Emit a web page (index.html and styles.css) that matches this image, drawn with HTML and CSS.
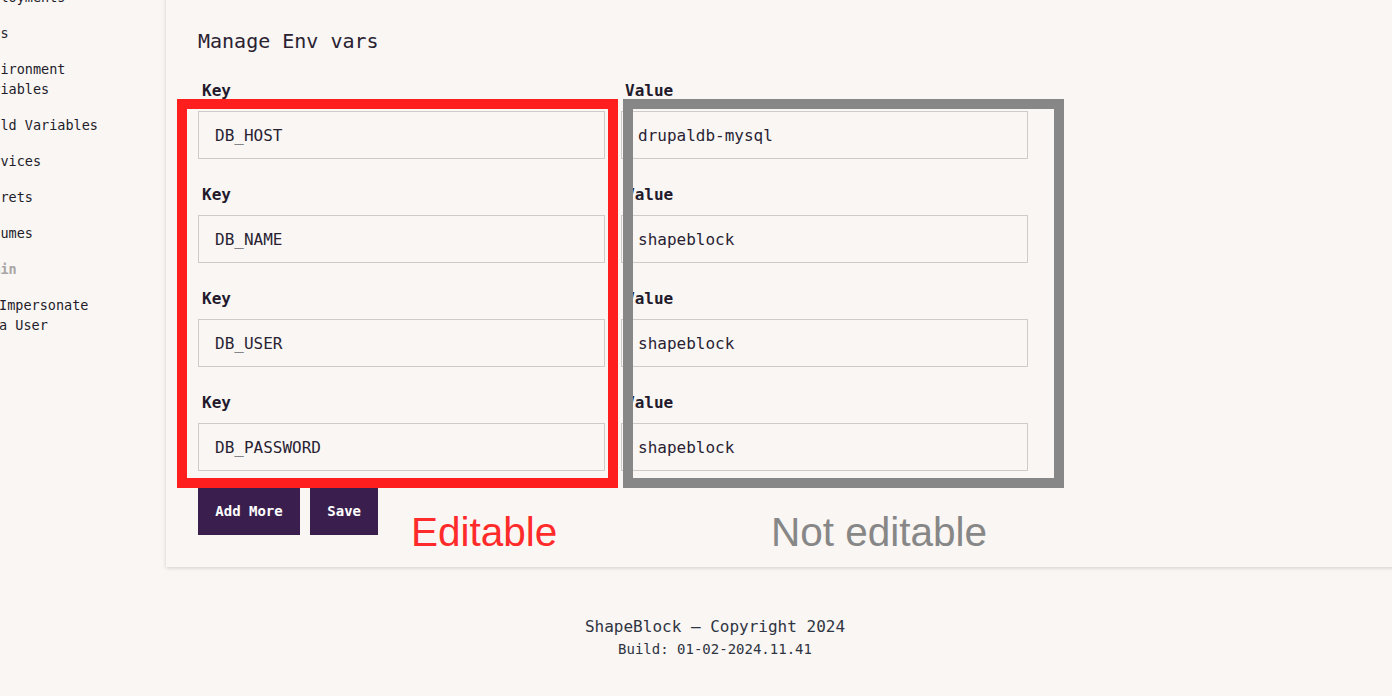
FILE: index.html
```html
<!DOCTYPE html>
<html lang="en">
<head>
<meta charset="utf-8">
<title>Manage Env vars</title>
<link rel="stylesheet" href="styles.css">
</head>
<body>
<div class="page">
  <aside class="sidebar">
    <ul class="nav">
      <li class="nav-item">Deployments</li>
      <li class="nav-item">Apps</li>
      <li class="nav-item">Environment Variables</li>
      <li class="nav-item">Build Variables</li>
      <li class="nav-item">Services</li>
      <li class="nav-item">Secrets</li>
      <li class="nav-item">Volumes</li>
      <li class="nav-item nav-heading">Admin</li>
      <li class="nav-item nav-sub">Impersonate a User</li>
    </ul>
  </aside>
  <main class="main">
    <section class="card">
      <h1 class="title">Manage Env vars</h1>
      <div class="form">
        <div class="rows">
          <div class="row">
            <div class="cell"><label class="label">Key</label><input class="field" type="text" value="DB_HOST"></div>
            <div class="cell"><label class="label">Value</label><input class="field" type="text" value="drupaldb-mysql" readonly></div>
          </div>
          <div class="row">
            <div class="cell"><label class="label">Key</label><input class="field" type="text" value="DB_NAME"></div>
            <div class="cell"><label class="label">Value</label><input class="field" type="text" value="shapeblock" readonly></div>
          </div>
          <div class="row">
            <div class="cell"><label class="label">Key</label><input class="field" type="text" value="DB_USER"></div>
            <div class="cell"><label class="label">Value</label><input class="field" type="text" value="shapeblock" readonly></div>
          </div>
          <div class="row">
            <div class="cell"><label class="label">Key</label><input class="field" type="text" value="DB_PASSWORD"></div>
            <div class="cell"><label class="label">Value</label><input class="field" type="text" value="shapeblock" readonly></div>
          </div>
        </div>
        <div class="actions">
          <button class="btn" type="button">Add More</button>
          <button class="btn" type="button">Save</button>
        </div>
        <div class="mark mark-red"></div>
        <div class="mark mark-gray"></div>
        <div class="note note-red">Editable</div>
        <div class="note note-gray">Not editable</div>
      </div>
    </section>
    <footer class="footer">
      <div class="copy">ShapeBlock — Copyright 2024</div>
      <div class="build">Build: 01-02-2024.11.41</div>
    </footer>
  </main>
</div>
</body>
</html>
```

FILE: styles.css
```css
html, body {
  margin: 0;
  padding: 0;
  background: #f9f6f3;
  overflow: hidden;
}
body {
  font-family: "DejaVu Sans Mono", "Liberation Mono", monospace;
  color: #251c2e;
}
.page {
  display: flex;
  align-items: flex-start;
  height: 696px;
}
.sidebar {
  width: 166px;
  flex: none;
  margin-top: -21px;
}
.nav {
  list-style: none;
  margin: 0 0 0 -24px;
  padding: 0;
  width: 126px;
  font-size: 13.5px;
  line-height: 20px;
}
.nav-item {
  padding: 8px 0;
  color: #231c2b;
}
.nav-heading {
  color: #a9a4a6;
  font-weight: bold;
}
.nav-sub {
  padding-left: 23px;
}
.main {
  flex: 1;
  min-width: 0;
}
.card {
  margin-top: -10px;
  margin-right: -20px;
  padding: 37px 32px 32px;
  background: #f9f6f3;
  box-shadow: 0 1px 4px rgba(0, 0, 0, 0.16);
}
.title {
  margin: 0 0 26px;
  font-size: 20px;
  line-height: 28px;
  font-weight: normal;
  color: #2a2231;
}
.form {
  position: relative;
}
.rows {
  display: flex;
  flex-direction: column;
  gap: 26px;
}
.row {
  display: grid;
  grid-template-columns: 407px 407px;
  column-gap: 16px;
}
.cell {
  display: flex;
  flex-direction: column;
}
.label {
  display: block;
  padding-left: 4px;
  margin-bottom: 10px;
  font-size: 16px;
  line-height: 20px;
  font-weight: bold;
  color: #231a2c;
}
.field {
  box-sizing: border-box;
  height: 48px;
  width: 407px;
  margin: 0;
  padding: 0 16px;
  border: 1px solid #d0cbcb;
  border-radius: 0;
  background: transparent;
  font-family: "DejaVu Sans Mono", "Liberation Mono", monospace;
  font-size: 16px;
  color: #2a1f33;
  outline: none;
}
.actions {
  display: flex;
  gap: 10px;
  margin-top: 16px;
}
.btn {
  height: 48px;
  padding: 0 17.3px;
  border: none;
  border-radius: 0;
  background: #3a1f4e;
  color: #ffffff;
  font-family: "DejaVu Sans Mono", "Liberation Mono", monospace;
  font-size: 14px;
  font-weight: bold;
}
.mark {
  position: absolute;
  top: 18px;
  width: 441px;
  height: 389px;
  box-sizing: border-box;
  border: 10px solid;
  pointer-events: none;
}
.mark-red {
  left: -21px;
  border-color: #ff1e1e;
}
.mark-gray {
  left: 425px;
  border-color: #878787;
}
.note {
  position: absolute;
  top: 431px;
  font-family: "Liberation Sans", Arial, sans-serif;
  font-size: 40.5px;
  line-height: 40px;
  white-space: nowrap;
}
.note-red {
  left: 213px;
  color: #ff2a2a;
}
.note-gray {
  left: 573px;
  color: #878787;
}
.footer {
  padding: 49px 128px 0 0;
  text-align: center;
  color: #2f3442;
}
.copy {
  font-size: 16px;
  line-height: 22px;
}
.build {
  font-size: 14px;
  line-height: 22px;
}
```
